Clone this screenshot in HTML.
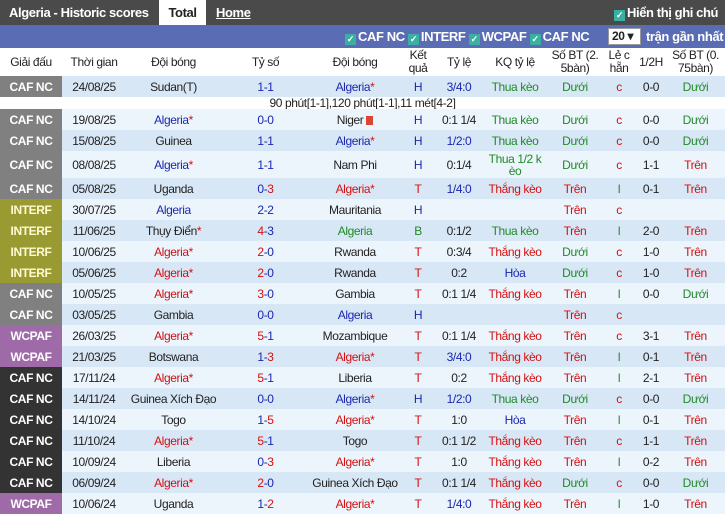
<!DOCTYPE html>
<html><head><meta charset="utf-8"><style>
*{margin:0;padding:0;box-sizing:border-box}
body{width:725px;height:517px;overflow:hidden;background:#fff;font-family:"Liberation Sans",Arial,sans-serif;font-size:12px;color:#222;letter-spacing:-0.4px}
.top{height:25px;background:#4a4a4a;position:relative;color:#fff;font-weight:bold;font-size:13px;white-space:nowrap}
.top span{position:absolute;top:5px}
.tab{position:absolute;left:159px;top:0;width:47px;height:25px;background:#fff;color:#222;text-align:center;line-height:25px;font-weight:bold}
.filter{height:23px;background:#5a6db4;color:#fff;font-weight:bold;font-size:13px;position:relative;white-space:nowrap}
.cb{display:inline-block;width:11px;height:11px;background:#3ab0a0;color:#fff;font-size:9px;line-height:11px;text-align:center;vertical-align:-1px;margin-right:2px;font-style:normal}
table{border-collapse:collapse;table-layout:fixed;width:725px}
td,th{text-align:center;white-space:nowrap;overflow:hidden;padding:0}
th{font-weight:normal;height:28px;line-height:13px;font-size:12px;color:#222;background:#fff}
tr.r td{height:21px}
tr.a td{background:#d8e7f6}
tr.b td{background:#ecf4fc}
td.lg{color:#fff;font-weight:bold;font-size:12px}
.g1{background:#808080!important}.g2{background:#333!important}.g3{background:#9a9a32!important;color:#fffbd2!important}.g4{background:#9e6aa8!important}
.bl{color:#1a27b0}.rd{color:#d41010}.gr{color:#1f8a26}
.note td{height:12px;line-height:12px;background:#fff;font-size:12px}
</style></head><body>
<div class="top"><span style="left:9px">Algeria - Historic scores</span><div class="tab">Total</div><span style="left:216px;text-decoration:underline">Home</span><span style="left:614px"><i class="cb">✓</i>Hiển thị ghi chú</span></div>
<div class="filter"><span style="position:absolute;left:345px;top:4px"><i class="cb">✓</i>CAF NC <i class="cb">✓</i>INTERF <i class="cb">✓</i>WCPAF <i class="cb">✓</i>CAF NC</span><span style="position:absolute;left:608px;top:3px;width:33px;height:17px;background:#fff;color:#222;font-size:12px;line-height:15px;padding-left:3px;border:1px solid #999">20 ▾</span><span style="position:absolute;left:646px;top:4px">trận gần nhất</span></div>
<table>
<colgroup><col style="width:62px"><col style="width:64px"><col style="width:95px"><col style="width:89px"><col style="width:90px"><col style="width:36px"><col style="width:46px"><col style="width:66px"><col style="width:54px"><col style="width:34px"><col style="width:30px"><col style="width:59px"></colgroup>
<tr><th>Giải đấu</th><th>Thời gian</th><th>Đội bóng</th><th>Tỷ số</th><th>Đội bóng</th><th>Kết<br>quả</th><th>Tỷ lệ</th><th>KQ tỷ lệ</th><th>Số BT (2.<br>5bàn)</th><th>Lẻ c<br>hẵn</th><th>1/2H</th><th>Số BT (0.<br>75bàn)</th></tr>
<tr class="r a"><td class="lg g1">CAF NC</td><td>24/08/25</td><td>Sudan(T)</td><td class="bl">1-1</td><td class="bl">Algeria<span class="rd">*</span></td><td class="bl">H</td><td class="bl">3/4:0</td><td class="gr">Thua kèo</td><td class="gr">Dưới</td><td class="rd">c</td><td>0-0</td><td class="gr">Dưới</td></tr>
<tr class="note"><td colspan="12">90 phút[1-1],120 phút[1-1],11 mét[4-2]</td></tr>
<tr class="r b"><td class="lg g1">CAF NC</td><td>19/08/25</td><td class="bl">Algeria<span class="rd">*</span></td><td class="bl">0-0</td><td>Niger <span style="display:inline-block;width:7px;height:9px;background:#d43;vertical-align:-1px"></span></td><td class="bl">H</td><td>0:1 1/4</td><td class="gr">Thua kèo</td><td class="gr">Dưới</td><td class="rd">c</td><td>0-0</td><td class="gr">Dưới</td></tr>
<tr class="r a"><td class="lg g1">CAF NC</td><td>15/08/25</td><td>Guinea</td><td class="bl">1-1</td><td class="bl">Algeria<span class="rd">*</span></td><td class="bl">H</td><td class="bl">1/2:0</td><td class="gr">Thua kèo</td><td class="gr">Dưới</td><td class="rd">c</td><td>0-0</td><td class="gr">Dưới</td></tr>
<tr class="r b"><td class="lg g1" style="height:27px">CAF NC</td><td>08/08/25</td><td class="bl">Algeria<span class="rd">*</span></td><td class="bl">1-1</td><td>Nam Phi</td><td class="bl">H</td><td>0:1/4</td><td class="gr" style="line-height:12px">Thua 1/2 k<br>èo</td><td class="gr">Dưới</td><td class="rd">c</td><td>1-1</td><td class="rd">Trên</td></tr>
<tr class="r a"><td class="lg g1">CAF NC</td><td>05/08/25</td><td>Uganda</td><td class="bl">0-<span class="rd">3</span></td><td class="rd">Algeria*</td><td class="rd">T</td><td class="bl">1/4:0</td><td class="rd">Thắng kèo</td><td class="rd">Trên</td><td class="gr">l</td><td>0-1</td><td class="rd">Trên</td></tr>
<tr class="r b"><td class="lg g3">INTERF</td><td>30/07/25</td><td class="bl">Algeria</td><td class="bl">2-2</td><td>Mauritania</td><td class="bl">H</td><td></td><td></td><td class="rd">Trên</td><td class="rd">c</td><td></td><td></td></tr>
<tr class="r a"><td class="lg g3">INTERF</td><td>11/06/25</td><td>Thụy Điển<span class="rd">*</span></td><td class="bl"><span class="rd">4</span>-3</td><td class="gr">Algeria</td><td class="gr">B</td><td>0:1/2</td><td class="gr">Thua kèo</td><td class="rd">Trên</td><td class="gr">l</td><td>2-0</td><td class="rd">Trên</td></tr>
<tr class="r b"><td class="lg g3">INTERF</td><td>10/06/25</td><td class="rd">Algeria*</td><td class="bl"><span class="rd">2</span>-0</td><td>Rwanda</td><td class="rd">T</td><td>0:3/4</td><td class="rd">Thắng kèo</td><td class="gr">Dưới</td><td class="rd">c</td><td>1-0</td><td class="rd">Trên</td></tr>
<tr class="r a"><td class="lg g3">INTERF</td><td>05/06/25</td><td class="rd">Algeria*</td><td class="bl"><span class="rd">2</span>-0</td><td>Rwanda</td><td class="rd">T</td><td>0:2</td><td class="bl">Hòa</td><td class="gr">Dưới</td><td class="rd">c</td><td>1-0</td><td class="rd">Trên</td></tr>
<tr class="r b"><td class="lg g1">CAF NC</td><td>10/05/25</td><td class="rd">Algeria*</td><td class="bl"><span class="rd">3</span>-0</td><td>Gambia</td><td class="rd">T</td><td>0:1 1/4</td><td class="rd">Thắng kèo</td><td class="rd">Trên</td><td class="gr">l</td><td>0-0</td><td class="gr">Dưới</td></tr>
<tr class="r a"><td class="lg g1">CAF NC</td><td>03/05/25</td><td>Gambia</td><td class="bl">0-0</td><td class="bl">Algeria</td><td class="bl">H</td><td></td><td></td><td class="rd">Trên</td><td class="rd">c</td><td></td><td></td></tr>
<tr class="r b"><td class="lg g4">WCPAF</td><td>26/03/25</td><td class="rd">Algeria*</td><td class="bl"><span class="rd">5</span>-1</td><td>Mozambique</td><td class="rd">T</td><td>0:1 1/4</td><td class="rd">Thắng kèo</td><td class="rd">Trên</td><td class="rd">c</td><td>3-1</td><td class="rd">Trên</td></tr>
<tr class="r a"><td class="lg g4">WCPAF</td><td>21/03/25</td><td>Botswana</td><td class="bl">1-<span class="rd">3</span></td><td class="rd">Algeria*</td><td class="rd">T</td><td class="bl">3/4:0</td><td class="rd">Thắng kèo</td><td class="rd">Trên</td><td class="gr">l</td><td>0-1</td><td class="rd">Trên</td></tr>
<tr class="r b"><td class="lg g2">CAF NC</td><td>17/11/24</td><td class="rd">Algeria*</td><td class="bl"><span class="rd">5</span>-1</td><td>Liberia</td><td class="rd">T</td><td>0:2</td><td class="rd">Thắng kèo</td><td class="rd">Trên</td><td class="gr">l</td><td>2-1</td><td class="rd">Trên</td></tr>
<tr class="r a"><td class="lg g2">CAF NC</td><td>14/11/24</td><td>Guinea Xích Đạo</td><td class="bl">0-0</td><td class="bl">Algeria<span class="rd">*</span></td><td class="bl">H</td><td class="bl">1/2:0</td><td class="gr">Thua kèo</td><td class="gr">Dưới</td><td class="rd">c</td><td>0-0</td><td class="gr">Dưới</td></tr>
<tr class="r b"><td class="lg g2">CAF NC</td><td>14/10/24</td><td>Togo</td><td class="bl">1-<span class="rd">5</span></td><td class="rd">Algeria*</td><td class="rd">T</td><td>1:0</td><td class="bl">Hòa</td><td class="rd">Trên</td><td class="gr">l</td><td>0-1</td><td class="rd">Trên</td></tr>
<tr class="r a"><td class="lg g2">CAF NC</td><td>11/10/24</td><td class="rd">Algeria*</td><td class="bl"><span class="rd">5</span>-1</td><td>Togo</td><td class="rd">T</td><td>0:1 1/2</td><td class="rd">Thắng kèo</td><td class="rd">Trên</td><td class="rd">c</td><td>1-1</td><td class="rd">Trên</td></tr>
<tr class="r b"><td class="lg g2">CAF NC</td><td>10/09/24</td><td>Liberia</td><td class="bl">0-<span class="rd">3</span></td><td class="rd">Algeria*</td><td class="rd">T</td><td>1:0</td><td class="rd">Thắng kèo</td><td class="rd">Trên</td><td class="gr">l</td><td>0-2</td><td class="rd">Trên</td></tr>
<tr class="r a"><td class="lg g2">CAF NC</td><td>06/09/24</td><td class="rd">Algeria*</td><td class="bl"><span class="rd">2</span>-0</td><td>Guinea Xích Đạo</td><td class="rd">T</td><td>0:1 1/4</td><td class="rd">Thắng kèo</td><td class="gr">Dưới</td><td class="rd">c</td><td>0-0</td><td class="gr">Dưới</td></tr>
<tr class="r b"><td class="lg g4">WCPAF</td><td>10/06/24</td><td>Uganda</td><td class="bl">1-<span class="rd">2</span></td><td class="rd">Algeria*</td><td class="rd">T</td><td class="bl">1/4:0</td><td class="rd">Thắng kèo</td><td class="rd">Trên</td><td class="gr">l</td><td>1-0</td><td class="rd">Trên</td></tr>
</table>
</body></html>
